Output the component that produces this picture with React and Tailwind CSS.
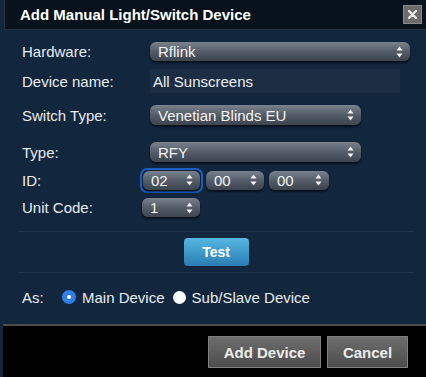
const Arrows = () => (
  <svg width="7" height="12" viewBox="0 0 7 12" className="shrink-0">
    <path d="M3.5 0.5 L6.5 4.5 L0.5 4.5 Z" fill="#f2f2f2" />
    <path d="M3.5 11.5 L6.5 7.5 L0.5 7.5 Z" fill="#f2f2f2" />
  </svg>
);

const Select = ({ value, className = "" }) => (
  <div
    className={`flex items-center justify-between h-[19px] pl-[8px] pr-[7px] rounded-[6px] bg-gradient-to-b from-[#7a828d] via-[#545d68] to-[#3c444e] shadow-[0_2px_2px_rgba(0,0,0,0.55)] text-[15px] leading-none text-[#f4f4f4] ${className}`}
  >
    <span>{value}</span>
    <Arrows />
  </div>
);

const Label = ({ children, w = "w-[128px]" }) => (
  <div className={`${w} shrink-0 text-[15px] leading-none text-[#e8ecf0]`}>
    {children}
  </div>
);

export default function App() {
  return (
    <div
      className="w-[426px] h-[377px] bg-[#12263d] flex flex-col overflow-hidden"
      style={{ fontFamily: '"Liberation Sans", Arial, sans-serif' }}
    >
      {/* Title bar */}
      <div className="h-[30px] ml-[4px] bg-[#08121d] border-l border-b border-[#27333f] flex items-center justify-between pl-[15px] pr-[4px]">
        <span className="text-[15px] font-bold text-white leading-none">
          Add Manual Light/Switch Device
        </span>
        <button className="w-[19px] h-[19px] bg-[#6b6b6b] border border-[#8a8a8a] flex items-center justify-center">
          <svg width="9" height="9" viewBox="0 0 9 9">
            <path d="M1 1 L8 8 M8 1 L1 8" stroke="#e4e4e4" strokeWidth="2.4" strokeLinecap="round" />
          </svg>
        </button>
      </div>

      {/* Body */}
      <div className="flex-1 flex flex-col pl-[18px] pr-[12px]">
        <div className="flex items-center pl-[4px] mt-[12px] h-[19px]">
          <Label>Hardware:</Label>
          <Select value="Rflink" className="w-[260px]" />
        </div>

        <div className="flex items-center pl-[4px] mt-[8px] h-[24px]">
          <Label>Device name:</Label>
          <div className="w-[250px] h-[24px] bg-[#1b2e44] flex items-center pl-[3px] text-[15px] leading-none text-[#eef0f2]">
            All Sunscreens
          </div>
        </div>

        <div className="flex items-center pl-[4px] mt-[12px] h-[20px]">
          <Label>Switch Type:</Label>
          <Select value="Venetian Blinds EU" className="w-[211px] h-[20px]" />
        </div>

        <div className="flex items-center pl-[4px] mt-[17px] h-[20px]">
          <Label>Type:</Label>
          <Select value="RFY" className="w-[211px] h-[20px]" />
        </div>

        <div className="flex items-center pl-[4px] mt-[7px] h-[22px]">
          <Label w="w-[118px]">ID:</Label>
          <div className="rounded-[7px] border-2 border-[#1d5fc0] p-px mr-[3px]">
            <Select value="02" className="w-[57px] h-[18px]" />
          </div>
          <Select value="00" className="w-[58px] mr-[5px]" />
          <Select value="00" className="w-[60px]" />
        </div>

        <div className="flex items-center pl-[4px] mt-[7px] h-[19px]">
          <Label w="w-[120px]">Unit Code:</Label>
          <Select value="1" className="w-[58px]" />
        </div>

        <div className="mt-[14px] h-px bg-[#1f344b]" />

        <div className="mt-[6px] flex justify-center">
          <button className="w-[65px] h-[28px] rounded-[4px] bg-gradient-to-b from-[#55b8e0] to-[#2a7db2] text-white text-[14px] font-bold leading-none">
            Test
          </button>
        </div>

        <div className="mt-[6px] h-px bg-[#1f344b]" />

        <div className="flex items-center pl-[4px] mt-[14px] h-[20px] text-[15px] leading-none text-[#e8ecf0]">
          <span className="w-[40px]">As:</span>
          <span className="w-[14px] h-[14px] rounded-full bg-[#2f7fe6] flex items-center justify-center mr-[6px]">
            <span className="w-[4px] h-[4px] rounded-full bg-white" />
          </span>
          <span className="mr-[8px]">Main Device</span>
          <span className="w-[13px] h-[13px] rounded-full bg-white mr-[6px]" />
          <span>Sub/Slave Device</span>
        </div>
      </div>

      {/* Footer */}
      <div className="h-[53px] ml-[3px] bg-black border-t-2 border-[#4d4d4d] flex justify-end items-start pt-[10px] pr-[18px] gap-[6px]">
        <button className="w-[113px] h-[32px] bg-gradient-to-b from-[#6e6e6e] to-[#4c4c4c] border border-[#808080] text-[15px] font-bold text-[#ececec] leading-none">
          Add Device
        </button>
        <button className="w-[81px] h-[32px] bg-gradient-to-b from-[#6e6e6e] to-[#4c4c4c] border border-[#808080] text-[15px] font-bold text-[#ececec] leading-none">
          Cancel
        </button>
      </div>
    </div>
  );
}
